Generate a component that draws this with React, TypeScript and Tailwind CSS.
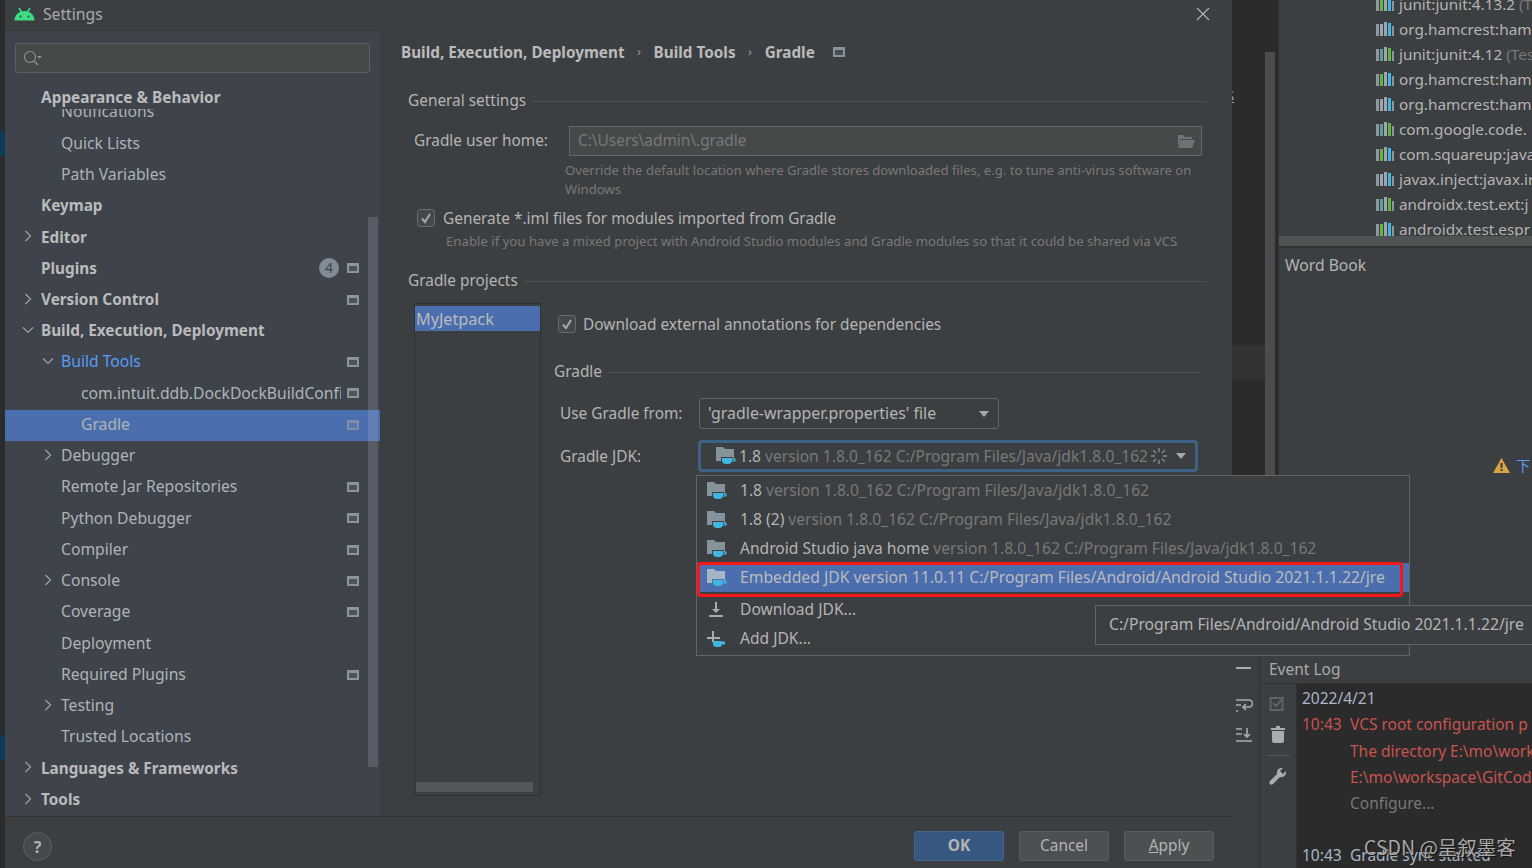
import React from "react";

const font = "font-['Noto_Sans','Open_Sans',sans-serif]";

function PageIcon({ dim }: { dim?: boolean }) {
  return (
    <svg width="12" height="10" viewBox="0 0 12 10" className="shrink-0">
      <rect x="0" y="0" width="12" height="10" fill={dim ? "#7f8ea8" : "#8a949b"} />
      <rect x="2" y="3" width="8" height="5" fill={dim ? "#5a76aa" : "#4d545c"} />
    </svg>
  );
}

function Chevron({ open }: { open?: boolean }) {
  return (
    <svg width="12" height="12" viewBox="0 0 12 12" className="shrink-0" fill="none" stroke="#9ea3a8" strokeWidth="1.2">
      {open ? <path d="M1 3.5l5 5 5-5" /> : <path d="M3.5 1l5 5-5 5" />}
    </svg>
  );
}

type Row = { t: string; lvl: number; bold?: boolean; chev?: "r" | "d"; page?: boolean; blue?: boolean; sel?: boolean; badge?: boolean };

const rows: Row[] = [
  { t: "Notifications", lvl: 1 },
  { t: "Quick Lists", lvl: 1 },
  { t: "Path Variables", lvl: 1 },
  { t: "Keymap", lvl: 0, bold: true },
  { t: "Editor", lvl: 0, bold: true, chev: "r" },
  { t: "Plugins", lvl: 0, bold: true, page: true, badge: true },
  { t: "Version Control", lvl: 0, bold: true, chev: "r", page: true },
  { t: "Build, Execution, Deployment", lvl: 0, bold: true, chev: "d" },
  { t: "Build Tools", lvl: 1, chev: "d", page: true, blue: true },
  { t: "com.intuit.ddb.DockDockBuildConfi", lvl: 2, page: true },
  { t: "Gradle", lvl: 2, page: true, sel: true },
  { t: "Debugger", lvl: 1, chev: "r" },
  { t: "Remote Jar Repositories", lvl: 1, page: true },
  { t: "Python Debugger", lvl: 1, page: true },
  { t: "Compiler", lvl: 1, page: true },
  { t: "Console", lvl: 1, chev: "r", page: true },
  { t: "Coverage", lvl: 1, page: true },
  { t: "Deployment", lvl: 1 },
  { t: "Required Plugins", lvl: 1, page: true },
  { t: "Testing", lvl: 1, chev: "r" },
  { t: "Trusted Locations", lvl: 1 },
  { t: "Languages & Frameworks", lvl: 0, bold: true, chev: "r" },
  { t: "Tools", lvl: 0, bold: true, chev: "r" },
];

function TreeRow({ r }: { r: Row }) {
  const pad = r.lvl === 0 ? "pl-[36px]" : r.lvl === 1 ? "pl-[56px]" : "pl-[76px]";
  const chevX = r.lvl === 0 ? "left-[17px]" : "left-[37px]";
  return (
    <div className={`relative flex h-[31.25px] shrink-0 items-center pb-[1px] pr-[21px] ${pad} ${r.sel ? "bg-[#4b6eaf]" : ""}`}>
      {r.chev && (
        <span className={`absolute ${chevX} top-[8px]`}>
          <Chevron open={r.chev === "d"} />
        </span>
      )}
      <span
        className={`w-[260px] overflow-hidden whitespace-nowrap ${r.bold ? "text-[15.3px] font-bold text-[#bbbbbb]" : r.blue ? "text-[15.7px] text-[#589df6]" : "text-[15.7px] text-[#b0b3b5]"}`}
      >
        {r.t}
      </span>
      <span className="ml-auto flex items-center gap-[8px]">
        {r.badge && (
          <span className="flex h-[20px] w-[20px] items-center justify-center rounded-full bg-[#7f8b96] text-[14px] leading-none text-[#3e434c]">4</span>
        )}
        {r.page && <PageIcon dim={r.sel} />}
      </span>
    </div>
  );
}

function Sidebar() {
  return (
    <div className="relative flex h-[785px] w-[375px] shrink-0 flex-col bg-[#3e434c]">
      <div className="px-[10px] pt-[12px]">
        <div className="flex h-[30px] items-center rounded-[3px] border border-[#5b5f60] bg-[#45494a] pl-[6px]">
          <svg width="22" height="18" viewBox="0 0 22 18" fill="none">
            <circle cx="8" cy="8" r="5.5" stroke="#8f9497" strokeWidth="1.1" />
            <path d="M12 12l4 4" stroke="#8f9497" strokeWidth="1.2" />
            <path d="M15 7h5l-2.5 2.5z" fill="#8f9497" />
          </svg>
        </div>
      </div>
      <div className="mt-[24px] flex min-h-0 flex-1 flex-col overflow-hidden">
        {rows.map((r) => (
          <TreeRow key={r.t} r={r} />
        ))}
      </div>
      <div className="absolute left-0 top-[55px] flex h-[23px] w-[363px] items-center bg-[#3e434c] pl-[36px] pt-[1px] text-[15.4px] font-bold text-[#bbbbbb]">
        Appearance &amp; Behavior
      </div>
      <div className="absolute left-[363px] top-[186px] h-[550px] w-[10px] bg-[#c0c4d0]/20" />
    </div>
  );
}

function SectionTitle({ t, cls }: { t: string; cls?: string }) {
  return (
    <div className={`flex items-center gap-[7px] ${cls ?? ""}`}>
      <span className="whitespace-nowrap text-[15.4px] text-[#b4b4b4]">{t}</span>
      <div className="h-px flex-1 bg-[#515151]" />
    </div>
  );
}

function Check() {
  return (
    <span className="flex h-[18px] w-[18px] shrink-0 items-center justify-center rounded-[3px] border border-[#6b6b6b] bg-[#43494a]">
      <svg width="12" height="12" viewBox="0 0 12 12" fill="none">
        <path d="M2 6.5l3 3.5 5-8" stroke="#a7a7a7" strokeWidth="2" />
      </svg>
    </span>
  );
}

function JdkIcon({ light }: { light?: boolean }) {
  return (
    <svg width="20" height="20" viewBox="0 0 20 20" className="shrink-0">
      <path d="M0 1h7l2 2h9v12H0z" fill={light ? "#a6b4c8" : "#87939a"} />
      <path d="M5 11h12v3a5 5 0 0 1-5 5h-2a5 5 0 0 1-5-5z" fill={light ? "#4b6eaf" : "#3c3f41"} />
      <path d="M6 12h10v2a4 4 0 0 1-4 4h-2a4 4 0 0 1-4-4z" fill="#40b6e0" />
      <path d="M15.5 12.5h4v3h-4z" fill="#40b6e0" />
      <path d="M16 13.5h2v1h-2z" fill={light ? "#4b6eaf" : "#3c3f41"} />
    </svg>
  );
}

function Content() {
  return (
    <div className="relative flex h-[785px] min-w-0 flex-1 flex-col pl-[21px] pr-[26px]">
      <div className="mt-[10px] flex h-[22px] items-center text-[15.3px] font-bold text-[#bbbbbb]">
        <span>Build, Execution, Deployment</span>
        <span className="mx-[12.5px] text-[13px] font-normal text-[#9a9a9a]">›</span>
        <span>Build Tools</span>
        <span className="mx-[12.5px] text-[13px] font-normal text-[#9a9a9a]">›</span>
        <span>Gradle</span>
        <span className="ml-[18px]">
          <svg width="12" height="10" viewBox="0 0 12 10">
            <rect width="12" height="10" fill="#8a949b" />
            <rect x="2" y="3" width="8" height="5" fill="#4a4e52" />
          </svg>
        </span>
      </div>
      <SectionTitle t="General settings" cls="ml-[7px] mt-[27px] h-[22px]" />
      <div className="ml-[13px] mt-[14px] flex items-center">
        <span className="w-[155px] text-[15.4px] text-[#b4b4b4]">Gradle user home:</span>
        <div className="mr-[4px] flex h-[30px] flex-1 items-center justify-between border border-[#646464] bg-[#45494a] pl-[8px] pr-[6px] text-[15.4px] text-[#787878]">
          <span>C:\Users\admin\.gradle</span>
          <svg width="18" height="15" viewBox="0 0 18 15">
            <path d="M1 1h5l2 2h7v2H4L1 12z" fill="#6e7376" />
            <path d="M4 6h14l-3 8H1z" fill="#6e7376" />
          </svg>
        </div>
      </div>
      <div className="ml-[164px] mt-[5px] w-[640px] text-[13.1px] leading-[19px] text-[#787878]">
        Override the default location where Gradle stores downloaded files, e.g. to tune anti-virus software on Windows
      </div>
      <div className="ml-[16px] mt-[9px] flex h-[20px] items-center gap-[8px]">
        <Check />
        <span className="pt-[2px] text-[15.4px] text-[#b4b4b4]">Generate *.iml files for modules imported from Gradle</span>
      </div>
      <div className="ml-[45px] mt-[4px] whitespace-nowrap text-[13.2px] leading-[19px] text-[#787878]">
        Enable if you have a mixed project with Android Studio modules and Gradle modules so that it could be shared via VCS
      </div>
      <SectionTitle t="Gradle projects" cls="ml-[7px] mt-[19px] h-[22px]" />
      <div className="ml-[13px] mt-[11px] flex min-h-0 flex-1 pb-[20px]">
        <div className="relative h-[493px] w-[127px] shrink-0 border border-[#2f3133] pt-[2px]">
          <div className="h-[25px] bg-[#4b6eaf] pl-[1px] text-[16.2px] leading-[27px] text-[#bbbbbb]">MyJetpack</div>
          <div className="absolute bottom-[3px] left-[1px] h-[10px] w-[117px] bg-[#54575a]" />
        </div>
        <div className="ml-[13px] flex min-w-0 flex-1 flex-col">
          <div className="ml-[4px] mt-[11px] flex h-[20px] items-center gap-[7px]">
            <Check />
            <span className="pt-[2px] text-[15.45px] text-[#b4b4b4]">Download external annotations for dependencies</span>
          </div>
          <SectionTitle t="Gradle" cls="mt-[27px] h-[22px] pr-[6px]" />
          <div className="ml-[6px] mt-[15px] flex items-center">
            <span className="w-[139px] text-[15.4px] text-[#b4b4b4]">Use Gradle from:</span>
            <div className="flex h-[31px] w-[300px] items-center justify-between rounded-[3px] border border-[#646464] pl-[8px] pr-[9px] text-[15.9px] text-[#b4b4b4]">
              <span>'gradle-wrapper.properties' file</span>
              <svg width="10" height="6" viewBox="0 0 10 6"><path d="M0 0h10L5 6z" fill="#a8a8a8" /></svg>
            </div>
          </div>
          <div className="ml-[6px] mt-[11px] flex items-center">
            <span className="w-[138px] pt-[2px] text-[15.4px] text-[#b4b4b4]">Gradle JDK:</span>
            <div className="flex h-[32px] w-[500px] items-center rounded-[4px] border-[3px] border-[#3d6185] pl-[15px] pr-[9px] text-[15.6px]">
              <JdkIcon />
              <span className="ml-[3px] pt-[2px] text-[#b4b4b4]">1.8</span>
              <span className="ml-[4px] whitespace-nowrap pt-[2px] text-[#787878]">version 1.8.0_162 C:/Program Files/Java/jdk1.8.0_162</span>
              <svg width="18" height="18" viewBox="0 0 18 18" className="ml-[2px] shrink-0" stroke="#8a8a8a" strokeWidth="1.4">
                <path d="M9 1v4M9 13v4M1 9h4M13 9h4M3.3 3.3l2.8 2.8M11.9 11.9l2.8 2.8M3.3 14.7l2.8-2.8M11.9 6.1l2.8-2.8" />
              </svg>
              <svg width="10" height="6" viewBox="0 0 10 6" className="ml-auto"><path d="M0 0h10L5 6z" fill="#a8a8a8" /></svg>
            </div>
          </div>
        </div>
      </div>
    </div>
  );
}

function Dialog() {
  return (
    <div className="flex h-[868px] w-[1227px] shrink-0 flex-col bg-[#3c3f41]">
      <div className="flex h-[31px] shrink-0 items-center pb-[3px] pl-[9px] pr-[22px]">
        <svg width="21" height="14" viewBox="0 0 21 14">
          <path d="M0.5 13.5C0.5 8 5 4 10.5 4S20.5 8 20.5 13.5z" fill="#3ddc84" />
          <path d="M5 1l2.5 4M16 1l-2.5 4" stroke="#3ddc84" strokeWidth="1.5" />
          <circle cx="6.5" cy="9.5" r="1" fill="#3c3f41" />
          <circle cx="14.5" cy="9.5" r="1" fill="#3c3f41" />
        </svg>
        <span className="ml-[8px] pt-[2px] text-[15.7px] text-[#a9a9a9]">Settings</span>
        <svg width="14" height="14" viewBox="0 0 14 14" className="ml-auto" stroke="#b4b4b4" strokeWidth="1.1">
          <path d="M1 1l12 12M13 1L1 13" />
        </svg>
      </div>
      <div className="flex min-h-0 flex-1">
        <Sidebar />
        <Content />
      </div>
      <div className="flex h-[52px] shrink-0 items-center border-t border-[#323232] pl-[18px] pr-[18px] pt-[6px]">
        <span className="mt-[2px] flex h-[29px] w-[29px] items-center justify-center rounded-full border border-[#5e6060] bg-[#46494b] text-[16px] font-bold text-[#b4b4b4]">?</span>
        <button className="ml-auto h-[30px] w-[90px] rounded-[3px] border border-[#42668f] bg-[#365880] text-[15.4px] font-bold text-[#b4b4b4]">OK</button>
        <button className="ml-[15px] h-[30px] w-[90px] rounded-[3px] border border-[#5a5c5e] bg-[#4c5052] text-[15.4px] text-[#b4b4b4]">Cancel</button>
        <button className="ml-[15px] h-[30px] w-[90px] rounded-[3px] border border-[#5a5c5e] bg-[#4c5052] text-[15.4px] text-[#b4b4b4]"><span className="underline">A</span>pply</button>
      </div>
    </div>
  );
}

function LibIcon({ v }: { v: number }) {
  const second = v === 0 ? "#62b543" : v === 1 ? "#9aa7b0" : "#62a08e";
  const fourth = v === 2 ? "#62b543" : "#40b6e0";
  return (
    <svg width="18" height="14" viewBox="0 0 18 14" className="shrink-0">
      <rect x="0" y="2" width="3" height="12" fill="#8d979e" />
      <rect x="4" y="2" width="3" height="12" fill={second} />
      <rect x="8" y="0" width="3" height="14" fill="#9aa7b0" />
      <rect x="12" y="1" width="3" height="13" fill={fourth} />
      <rect x="16" y="4" width="2" height="10" fill="#8d979e" />
    </svg>
  );
}

const libs: [string, string?][] = [
  ["junit:junit:4.13.2", " (T"],
  ["org.hamcrest:ham"],
  ["junit:junit:4.12", " (Tes"],
  ["org.hamcrest:ham"],
  ["org.hamcrest:ham"],
  ["com.google.code."],
  ["com.squareup:java"],
  ["javax.inject:javax.ir"],
  ["androidx.test.ext:j"],
  ["androidx.test.espr"],
];

function RightColumn() {
  return (
    <div className="flex h-[868px] w-[300px] shrink-0 flex-col bg-[#3c3f41]">
      <div className="flex h-[656px] shrink-0">
        <div className="relative flex w-[46px] shrink-0 justify-end overflow-hidden bg-[#2b2b2b] pr-[3px]">
          <div className="mt-[52px] h-[604px] w-[10px] bg-[#4a4c4e]" />
          <span className="absolute -left-[6px] top-[84px] text-[15px] text-[#9a9a9a] underline">S</span>
          <div className="absolute left-0 top-[345px] h-[35px] w-[33px] bg-[#323232]" />
        </div>
        <div className="relative min-w-0 flex-1 border-l border-[#323232]">
          <div className="h-[236px] overflow-hidden pl-[97px]">
            <div className="-mt-[8.5px]">
              {libs.map(([a, b], i) => (
                <div key={i} className="flex h-[25px] items-center whitespace-pre text-[15.3px] text-[#b4b4b4]">
                  <LibIcon v={i % 3} />
                  <span className="ml-[5px]">{a}</span>
                  {b && <span className="text-[#787878]">{b}</span>}
                </div>
              ))}
            </div>
          </div>
          <div className="h-[10px] bg-[#505354]" />
          <div className="h-[2px] bg-[#2f3133]" />
          <div className="ml-[6px] mt-[6px] text-[15.7px] text-[#b4b4b4]">Word Book</div>
          <div className="absolute left-[214px] top-[455px] flex items-center gap-[6px]">
            <svg width="17" height="15" viewBox="0 0 17 15">
              <path d="M8.5 0L17 15H0z" fill="#d9a343" />
              <path d="M7.5 5h2v5h-2zM7.5 11h2v2h-2z" fill="#3c3f41" />
            </svg>
            <span className="font-['Noto_Sans_CJK_SC',sans-serif] text-[14px] text-[#589df6]">下</span>
          </div>
        </div>
      </div>
      <div className="flex min-h-0 flex-1">
        <div className="flex w-[28px] shrink-0 flex-col items-center border-r border-[#323232] pr-[4px] pt-[11px]">
          <div className="h-[2px] w-[15px] bg-[#a8adb0]" />
          <svg width="18" height="16" viewBox="0 0 18 16" className="mt-[29px]" fill="none" stroke="#a8adb0" strokeWidth="1.6">
            <path d="M1 2h13a3 3 0 0 1 0 7H9M1 7h5M1 13h2M11 6l-3 3 3 3" />
          </svg>
          <svg width="18" height="16" viewBox="0 0 18 16" className="mt-[13px]" fill="none" stroke="#a8adb0" strokeWidth="1.6">
            <path d="M1 2h6M1 7h6M1 14h16M12 1v9M9 7l3 3 3-3" />
          </svg>
        </div>
        <div className="flex min-w-0 flex-1 flex-col">
          <div className="flex h-[28px] shrink-0 items-center border-b border-[#323232] pl-[9px] text-[15.5px] text-[#a9a9a9]">Event Log</div>
          <div className="flex min-h-0 flex-1">
            <div className="flex w-[37px] shrink-0 flex-col items-center border-r border-[#323232] pt-[11px]">
              <svg width="18" height="17" viewBox="0 0 18 17" fill="none">
                <rect x="1.5" y="3" width="12" height="12" stroke="#5f6365" strokeWidth="2" />
                <path d="M4 8l3 3 8-9" stroke="#5f6365" strokeWidth="2" />
              </svg>
              <svg width="14" height="17" viewBox="0 0 14 17" className="mt-[14px]" fill="#a8adb0">
                <path d="M5 0h4v2h5v2H0V2h5zM1 5h12v10a2 2 0 0 1-2 2H3a2 2 0 0 1-2-2z" />
              </svg>
              <div className="mt-[12px] h-px w-[23px] bg-[#55585a]" />
              <svg width="18" height="18" viewBox="0 0 18 18" className="mt-[11px]" fill="#a8adb0">
                <path d="M17 4l-3 3-3-3 3-3a5 5 0 0 0-6 6L1 14a2 2 0 0 0 3 3l7-7a5 5 0 0 0 6-6z" />
              </svg>
            </div>
            <div className="relative min-w-0 flex-1 overflow-hidden whitespace-nowrap bg-[#2b2b2b] pl-[5px] pt-[1px] text-[15.5px] leading-[26.3px]">
              <div className="text-[#a9b7c6]">2022/4/21</div>
              <div className="flex text-[#c75450]"><span className="w-[48px]">10:43</span><span>VCS root configuration p</span></div>
              <div className="pl-[48px] text-[#c75450]">The directory E:\mo\work</div>
              <div className="pl-[48px] text-[#c75450]">E:\mo\workspace\GitCod</div>
              <div className="pl-[48px] text-[#787878]">Configure...</div>
              <div className="mt-[26px] flex text-[#a9b7c6]"><span className="w-[48px]">10:43</span><span>Gradle sync started</span></div>
              <span className="absolute left-[67px] top-[150px] font-['Noto_Sans_CJK_SC',sans-serif] text-[19.5px] text-[#a8a8a8] [text-shadow:1px_1px_1px_#111]">CSDN @呈叙墨客</span>
            </div>
          </div>
        </div>
      </div>
    </div>
  );
}

function Dropdown() {
  const items: [string, string, boolean?][] = [
    ["1.8", "version 1.8.0_162 C:/Program Files/Java/jdk1.8.0_162"],
    ["1.8 (2)", "version 1.8.0_162 C:/Program Files/Java/jdk1.8.0_162"],
    ["Android Studio java home", "version 1.8.0_162 C:/Program Files/Java/jdk1.8.0_162"],
  ];
  return (
    <div className="absolute left-[696px] top-[475px] h-[181px] w-[714px] border border-[#646464] bg-[#3c3f41] text-[15.6px]">
      {items.map(([a, b]) => (
        <div key={a} className="flex h-[29px] items-center pl-[10px]">
          <JdkIcon />
          <span className="ml-[13px] text-[#b4b4b4]">{a}</span>
          <span className="ml-[4px] text-[#787878]">{b}</span>
        </div>
      ))}
      <div className="flex h-[29px] items-center bg-[#4b6eaf] pl-[10px]">
        <JdkIcon light />
        <span className="ml-[13px] text-[15.72px] text-[#bbbbbb]">Embedded JDK version 11.0.11 C:/Program Files/Android/Android Studio 2021.1.1.22/jre</span>
      </div>
      <div className="mt-[3px] flex h-[29px] items-center pl-[9px]">
        <svg width="20" height="18" viewBox="0 0 20 18" fill="#a8adb0" className="shrink-0">
          <path d="M9 1h2v7h3l-4 4-4-4h3zM3 14h14v2H3z" />
        </svg>
        <span className="ml-[14px] text-[#b4b4b4]">Download JDK...</span>
      </div>
      <div className="flex h-[29px] items-center pl-[9px]">
        <svg width="20" height="20" viewBox="0 0 20 20" className="shrink-0">
          <path d="M6 2h2v6h6v2H8v3H6v-3H1V8h5z" fill="#a8adb0" />
          <path d="M7 12h9v2.5a3.5 3.5 0 0 1-3.5 3.5h-2a3.5 3.5 0 0 1-3.5-3.5z" fill="#40b6e0" />
          <path d="M15.5 12.5h3.5v3h-3.5z" fill="#40b6e0" />
        </svg>
        <span className="ml-[14px] text-[#b4b4b4]">Add JDK...</span>
      </div>
    </div>
  );
}

export default function App() {
  return (
    <div className={`relative flex h-[868px] w-[1532px] overflow-hidden bg-[#2b2b2b] ${font}`}>
      <div className="relative w-[5px] shrink-0 bg-[#2b2b2b]">
        <div className="absolute left-0 top-[131px] h-[25px] w-[5px] bg-[#0d3a58]" />
        <div className="absolute left-0 top-[735px] h-[25px] w-[5px] bg-[#0d3a58]" />
      </div>
      <Dialog />
      <RightColumn />
      <Dropdown />
      <div className="pointer-events-none absolute left-[697px] top-[562px] h-[35px] w-[706px] rounded-[4px] border-[3px] border-[#f5181a]" />
      <div className="absolute left-[1095px] top-[605px] flex h-[40px] w-[445px] items-center border border-[#646464] bg-[#3c3f41] pl-[13px] text-[15.7px] text-[#b4b4b4]">
        C:/Program Files/Android/Android Studio 2021.1.1.22/jre
      </div>
    </div>
  );
}
